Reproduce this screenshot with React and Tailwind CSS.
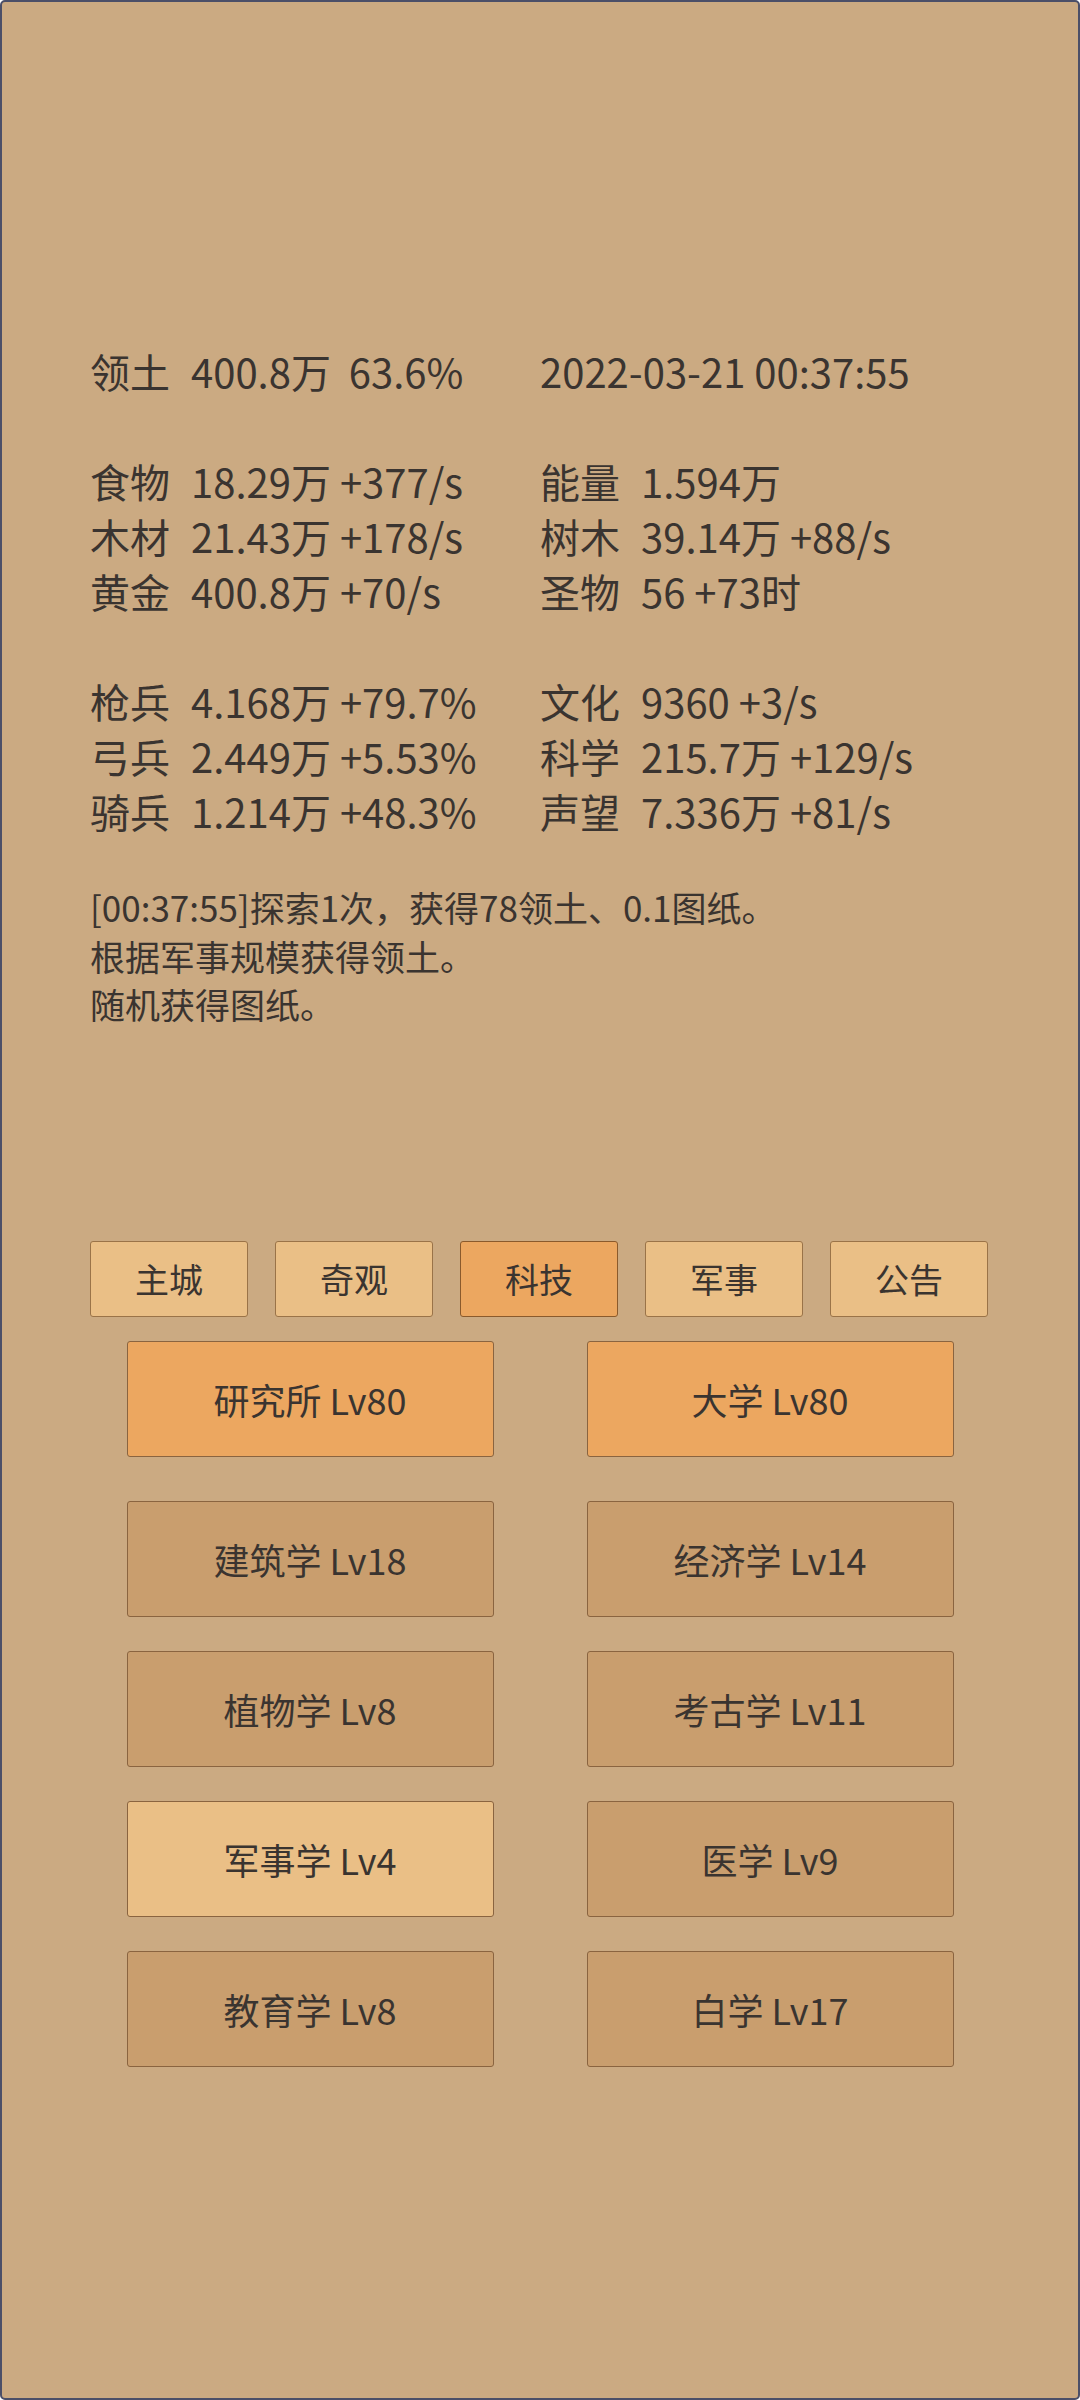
const font = { fontFamily: '"Noto Sans CJK SC", "Noto Sans", sans-serif' }

const stats = [
  [['领土', '400.8万  63.6%'], [null, '2022-03-21 00:37:55']],
  null,
  [['食物', '18.29万 +377/s'], ['能量', '1.594万']],
  [['木材', '21.43万 +178/s'], ['树木', '39.14万 +88/s']],
  [['黄金', '400.8万 +70/s'], ['圣物', '56 +73时']],
  null,
  [['枪兵', '4.168万 +79.7%'], ['文化', '9360 +3/s']],
  [['弓兵', '2.449万 +5.53%'], ['科学', '215.7万 +129/s']],
  [['骑兵', '1.214万 +48.3%'], ['声望', '7.336万 +81/s']],
]

const tabs = ['主城', '奇观', '科技', '军事', '公告']

const techs = [
  [{ name: '研究所 Lv80', kind: 'active' }, { name: '大学 Lv80', kind: 'active' }],
  [{ name: '建筑学 Lv18' }, { name: '经济学 Lv14' }],
  [{ name: '植物学 Lv8' }, { name: '考古学 Lv11' }],
  [{ name: '军事学 Lv4', kind: 'light' }, { name: '医学 Lv9' }],
  [{ name: '教育学 Lv8' }, { name: '白学 Lv17' }],
]

function Cell({ cell }) {
  if (!cell) return <div />
  const [label, value] = cell
  return (
    <div className="flex whitespace-pre">
      {label && <span className="w-[101px] shrink-0">{label}</span>}
      <span>{value}</span>
    </div>
  )
}

function TechButton({ item }) {
  const bg =
    item.kind === 'active' ? 'bg-[#eca760]' : item.kind === 'light' ? 'bg-[#eabf86]' : 'bg-[#c99e6e]'
  return (
    <button
      className={`w-[367px] h-[116px] rounded-[3px] border border-[#8a6440] ${bg} text-[36px] text-[#3a3430] flex items-center justify-center`}
      style={font}
    >
      {item.name}
    </button>
  )
}

export default function App() {
  return (
    <div
      className="w-[1080px] h-[2400px] bg-[#cbaa82] border-2 border-[#4b4f68] rounded-[5px] text-[#3a3430] overflow-hidden"
      style={font}
    >
      {/* Resource stats */}
      <div className="pt-[342px] pl-[88px] text-[40px] leading-[55px]">
        {stats.map((row, i) =>
          row ? (
            <div key={i} className="grid grid-cols-[450px_450px]">
              <Cell cell={row[0]} />
              <Cell cell={row[1]} />
            </div>
          ) : (
            <div key={i} className="h-[55px]" />
          )
        )}
      </div>

      {/* Event log */}
      <div className="mt-[44px] pl-[88px] text-[35px] leading-[48.5px]">
        <div>[00:37:55]探索1次，获得78领土、0.1图纸。</div>
        <div>根据军事规模获得领土。</div>
        <div>随机获得图纸。</div>
      </div>

      {/* Tabs */}
      <div className="mt-[212px] pl-[88px] flex gap-[27px]">
        {tabs.map(t => (
          <button
            key={t}
            className={`w-[158px] h-[76px] rounded-[3px] border text-[34px] text-[#3a3430] flex items-center justify-center ${t === '科技' ? 'bg-[#eca760] border-[#8a5a2c]' : 'bg-[#eabf86] border-[#9a7348]'}`}
            style={font}
          >
            {t}
          </button>
        ))}
      </div>

      {/* Tech buttons */}
      <div className="mt-[24px] flex flex-col items-center">
        {techs.map((row, i) => (
          <div key={i} className={`flex gap-[93px] ${i === 0 ? 'mb-[44px]' : 'mb-[34px]'}`}>
            {row.map(item => (
              <TechButton key={item.name} item={item} />
            ))}
          </div>
        ))}
      </div>
    </div>
  )
}
